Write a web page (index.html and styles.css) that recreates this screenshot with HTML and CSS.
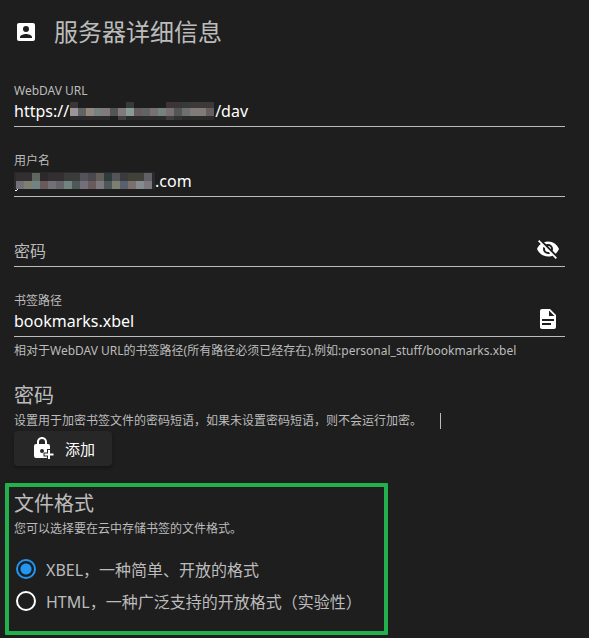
FILE: index.html
```
<!DOCTYPE html>
<html lang="zh-CN">
<head>
	<meta charset="UTF-8">
	<meta name="viewport" content="width=device-width, initial-scale=1.0">
	<title>服务器详细信息</title>
	<link rel="stylesheet" href="styles.css">
</head>
<body>
	<main class="container">
		<header class="title">
			<svg class="icon" viewBox="0 0 24 24"><path d="M6,17C6,15 10,13.9 12,13.9C14,13.9 18,15 18,17V18H6M15,9A3,3 0 0,1 12,12A3,3 0 0,1 9,9A3,3 0 0,1 12,6A3,3 0 0,1 15,9M3,5V19A2,2 0 0,0 5,21H19A2,2 0 0,0 21,19V5A2,2 0 0,0 19,3H5C3.89,3 3,3.9 3,5Z"/></svg>
			<h1>服务器详细信息</h1>
		</header>

		<form>
			<div class="field">
				<label class="label" for="url">WebDAV URL</label>
				<div class="row">
					<span>https://</span>
					<svg class="mosaic" width="144" height="20" viewBox="0 0 144 20" shape-rendering="crispEdges">
						<path fill="#3b3636" d="M0 0h8v6H0zM96 0h16v6H96z"/>
						<path fill="#363b38" d="M56 0h8v6h-8zM112 0h8v6h-8z"/>
						<path fill="#3c3939" d="M120 0h24v6h-24z"/>
						<path fill="#9b9499" d="M0 6h8v8H0z"/>
						<path fill="#606564" d="M8 6h8v8H8zM72 6h8v8h-8z"/>
						<path fill="#94877e" d="M16 6h8v8h-8z"/>
						<path fill="#75827f" d="M24 6h8v8h-8zM88 6h8v8h-8z"/>
						<path fill="#807b78" d="M32 6h8v8h-8zM48 6h8v8h-8zM120 6h16v8h-16z"/>
						<path fill="#535556" d="M40 6h8v8h-8zM104 6h8v8h-8z"/>
						<path fill="#899c94" d="M56 6h8v8h-8z"/>
						<path fill="#685d5e" d="M64 6h8v8h-8zM136 6h8v8h-8z"/>
						<path fill="#797073" d="M80 6h8v8h-8zM96 6h8v8h-8z"/>
						<path fill="#6d7070" d="M112 6h8v8h-8z"/>
						<path fill="#2c2b2b" d="M0 14h40v4H0zM56 14h40v4H56zM112 14h32v4h-32z"/>
						<path fill="#403e3f" d="M48 14h8v4h-8zM96 14h8v4h-8z"/>
						<path fill="#323433" d="M104 14h8v4h-8z"/>
					</svg>
					<input id="url" type="text" value="/dav" spellcheck="false">
				</div>
			</div>

			<div class="field">
				<label class="label" for="username">用户名</label>
				<div class="row">
					<svg class="mosaic" width="141" height="20" viewBox="0 0 141 20" shape-rendering="crispEdges">
						<path fill="#2b2929" d="M0 0h141v17H0z"/>
						<path fill="#332e2f" d="M2 1h16v8H2zM34 1h16v8H34z"/>
						<path fill="#606760" d="M18 1h8v8h-8z"/>
						<path fill="#3b3b3c" d="M50 1h16v8H50zM106 1h16v8h-16z"/>
						<path fill="#53535a" d="M66 1h8v8h-8zM98 1h8v8h-8z"/>
						<path fill="#4a474e" d="M74 1h8v8h-8z"/>
						<path fill="#625f5b" d="M82 1h8v8h-8z"/>
						<path fill="#303b3b" d="M90 1h8v8h-8z"/>
						<path fill="#424139" d="M114 1h16v8h-16z"/>
						<path fill="#606166" d="M130 1h8v8h-8z"/>
						<path fill="#737177" d="M2 9h8v8H2zM34 9h8v8h-8zM66 9h8v8h-8z"/>
						<path fill="#7d7f70" d="M10 9h8v8h-8zM98 9h8v8h-8z"/>
						<path fill="#718481" d="M18 9h8v8h-8zM50 9h8v8h-8z"/>
						<path fill="#695b5b" d="M26 9h8v8h-8zM74 9h8v8h-8z"/>
						<path fill="#656469" d="M42 9h8v8h-8z"/>
						<path fill="#4f5858" d="M58 9h8v8h-8zM90 9h8v8h-8z"/>
						<path fill="#7d777e" d="M82 9h8v8h-8zM130 9h8v8h-8z"/>
						<path fill="#596170" d="M106 9h8v8h-8z"/>
						<path fill="#7b706c" d="M114 9h8v8h-8z"/>
						<path fill="#868b91" d="M122 9h8v8h-8z"/>
						<path fill="#fff" d="M1 18h2v1H1zM3 17h1v1H3z"/>
					</svg>
					<input id="username" type="text" value=".com" spellcheck="false">
				</div>
			</div>

			<div class="field field-empty">
				<div class="row">
					<label for="password">密码</label>
					<input id="password" type="password">
					<button class="btn-icon" type="button" aria-label="密码"><svg class="icon" viewBox="0 0 24 24"><path d="M11.83,9L15,12.16C15,12.11 15,12.05 15,12A3,3 0 0,0 12,9C11.94,9 11.89,9 11.83,9M7.53,9.8L9.08,11.35C9.03,11.56 9,11.77 9,12A3,3 0 0,0 12,15C12.22,15 12.44,14.97 12.65,14.92L14.2,16.47C13.53,16.8 12.79,17 12,17A5,5 0 0,1 7,12C7,11.21 7.2,10.47 7.53,9.8M2,4.27L4.28,6.55L4.73,7C3.08,8.3 1.78,10 1,12C2.73,16.39 7,19.5 12,19.5C13.55,19.5 15.03,19.2 16.38,18.66L16.81,19.08L19.73,22L21,20.73L3.27,3M12,7A5,5 0 0,1 17,12C17,12.64 16.87,13.26 16.64,13.82L19.57,16.75C21.07,15.5 22.27,13.86 23,12C21.27,7.61 17,4.5 12,4.5C10.6,4.5 9.26,4.75 8,5.2L10.17,7.35C10.74,7.13 11.35,7 12,7Z"/></svg></button>
				</div>
			</div>

			<div class="field field-hint">
				<label class="label" for="path">书签路径</label>
				<div class="row">
					<input id="path" type="text" value="bookmarks.xbel" spellcheck="false">
					<button class="btn-icon" type="button" aria-label="书签路径"><svg class="icon" viewBox="0 0 24 24"><path d="M13,9H18.5L13,3.5V9M6,2H14L20,8V20A2,2 0 0,1 18,22H6C4.89,22 4,21.1 4,20V4C4,2.89 4.89,2 6,2M15,18V16H6V18H15M18,14V12H6V14H18Z"/></svg></button>
				</div>
				<p class="hint">相对于WebDAV URL的书签路径(所有路径必须已经存在).例如:personal_stuff/bookmarks.xbel</p>
			</div>

			<section>
				<h2>密码</h2>
				<p class="caption">设置用于加密书签文件的密码短语，如果未设置密码短语，则不会运行加密。<span class="caret"></span></p>
				<button class="btn" type="button">
					<svg class="icon" viewBox="0 0 24 24"><path fill-rule="evenodd" d="M12,0C9.2,0 7,2.2 7,5V7H6A2,2 0 0,0 4,9V19A2,2 0 0,0 6,21H18A2,2 0 0,0 20,19V9A2,2 0 0,0 18,7H17V5C17,2.2 14.8,0 12,0M12,2A3,3 0 0,1 15,5V7H9V5A3,3 0 0,1 12,2M12,12A2,2 0 0,1 14,14A2,2 0 0,1 12,16A2,2 0 0,1 12,12Z"/><path class="plus" d="M18,13H20V16.5H23.5V18.5H20V22H18V18.5H14.5V16.5H18Z"/></svg>
					添加
				</button>
			</section>

			<section class="format">
				<h2>文件格式</h2>
				<p class="caption">您可以选择要在云中存储书签的文件格式。</p>
				<div class="radios">
					<label class="radio"><input type="radio" name="format" checked>XBEL，一种简单、开放的格式</label>
					<label class="radio"><input type="radio" name="format">HTML，一种广泛支持的开放格式（实验性）</label>
				</div>
			</section>
		</form>
	</main>
</body>
</html>
```

FILE: styles.css
```
* {
	margin: 0;
	padding: 0;
	box-sizing: border-box;
}
:root {
	--bg: #1e1e1e;
	--muted: #bcbcbc;
	--blue: #2196f3;
	--green: #22b14c;
}
body {
	background-color: var(--bg);
	color: var(--muted);
	font-family: "Noto Sans", "Noto Sans CJK SC", sans-serif;
	font-size: 16px;
}
.container {
	padding: 12px 24px 3px 14px;
}
.icon {
	width: 24px;
	height: 24px;
	flex-shrink: 0;
	display: block;
	fill: white;
}

/* Title */
.title {
	display: flex;
	align-items: center;
	gap: 16px;
	height: 40px;
	margin-bottom: 31px;
}
h1 {
	font-size: 24px;
	font-weight: 400;
	line-height: 40px;
}
h2 {
	font-size: 20px;
	font-weight: 400;
	line-height: 30px;
}

/* Fields */
.field {
	margin-bottom: 26px;
}
.field-empty {
	padding-top: 16px;
}
.field-hint {
	margin-bottom: 22px;
}
.label {
	display: block;
	width: fit-content;
	font-size: 12px;
	line-height: 16px;
}
.row {
	display: flex;
	height: 28px;
	line-height: 24px;
	border-bottom: 1px solid var(--muted);
}
.row span {
	color: white;
}
.row input {
	flex: 1;
	min-width: 0;
	height: 24px;
	border: none;
	outline: none;
	background: none;
	color: white;
	font: inherit;
}
.mosaic {
	flex-shrink: 0;
	margin: 3px 1px 0;
}
.mosaic:first-child {
	margin-left: 0;
	margin-right: 0;
}
.btn-icon {
	width: 24px;
	height: 24px;
	margin: -2px 5px 0 0;
	border: none;
	background: none;
	cursor: pointer;
}
.hint {
	margin-top: 6px;
	font-size: 12px;
	line-height: 16px;
}
.caption {
	display: flex;
	align-items: center;
	font-size: 12px;
	line-height: 20px;
}
.caret {
	width: 1px;
	height: 16px;
	margin-left: 18px;
	background-color: var(--muted);
}

/* Button */
.btn {
	display: flex;
	align-items: center;
	gap: 11px;
	height: 35px;
	padding: 0 17px 0 16px;
	border: none;
	border-radius: 4px;
	background-color: #272727;
	box-shadow: 0 2px 3px rgba(0, 0, 0, .3);
	color: white;
	font: inherit;
	font-size: 15px;
	cursor: pointer;
}
.plus {
	stroke: #272727;
	stroke-width: 2px;
	paint-order: stroke;
}

/* File format */
.format {
	width: fit-content;
	max-width: 100%;
	margin-top: 17px;
	margin-left: -9px;
	padding: 2px 22px 14px 5px;
	border: 4px solid var(--green);
	border-radius: 1px;
}
.radios {
	padding-top: 14px;
}
.radio {
	display: flex;
	align-items: center;
	gap: 10px;
	min-height: 32px;
	padding-left: 2px;
	cursor: pointer;
}
.radio input {
	appearance: none;
	width: 20px;
	height: 20px;
	flex-shrink: 0;
	border: 2px solid white;
	border-radius: 50%;
}
.radio input:checked {
	border-color: var(--blue);
	background: radial-gradient(circle, var(--blue) 5px, transparent 6px);
}
```
